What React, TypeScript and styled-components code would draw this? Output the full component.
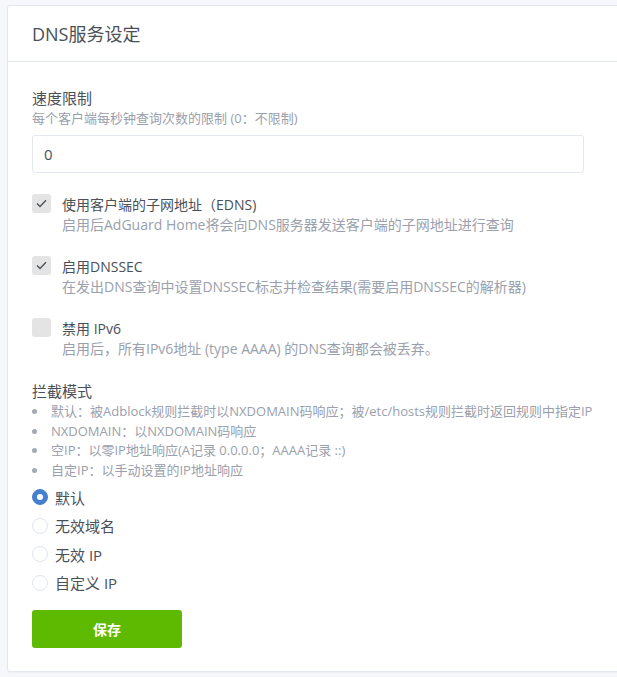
import React from "react";
import styled, { createGlobalStyle } from "styled-components";

const Global = createGlobalStyle`
  html, body {
    margin: 0;
    padding: 0;
    background: #f5f7fb;
    overflow: hidden;
  }
  body {
    font-family: "Open Sans", "Noto Sans CJK SC", sans-serif;
    color: #495057;
  }
  * { box-sizing: border-box; }
`;

const Page = styled.div`
  padding: 5px 0 5px 7px;
  overflow: hidden;
`;

const Card = styled.section`
  width: 640px;
  background: #fff;
  border: 1px solid #e3e7ee;
  border-radius: 3px;
  box-shadow: 0 1px 2px rgba(0, 0, 0, 0.04);
`;

const Header = styled.header`
  height: 56px;
  padding: 0 24px;
  display: flex;
  align-items: center;
  border-bottom: 1px solid #e3e7ee;
`;

const Title = styled.h3`
  margin: 0;
  font-size: 18px;
  font-weight: 400;
  line-height: 22px;
  color: #495057;
`;

const Body = styled.div`
  padding: 26px 24px 23px;
`;

const Label = styled.div<{ $size?: number }>`
  font-size: ${(p) => p.$size ?? 15}px;
  line-height: 20px;
  color: #495057;
`;

const Hint = styled.div<{ $size?: number }>`
  font-size: ${(p) => p.$size ?? 13}px;
  line-height: 20px;
  color: #9aa0ac;
`;

const Input = styled.input`
  display: block;
  width: 552px;
  height: 38px;
  margin-top: 7px;
  padding: 0 11px;
  border: 1px solid #e3e7ee;
  border-radius: 3px;
  font-family: inherit;
  font-size: 15px;
  color: #495057;
  outline: none;
`;

const CheckGroup = styled.div`
  display: grid;
  grid-template-columns: 19px 1fr;
  column-gap: 11px;
  margin-top: 21px;
`;

const Box = styled.span`
  width: 19px;
  height: 19px;
  border-radius: 3px;
  background: #e4e4e4;
  display: flex;
  align-items: center;
  justify-content: center;
`;

const CheckText = styled.div`
  padding-top: 1px;
`;

const Section = styled.div`
  margin-top: 22px;
`;

const List = styled.ul`
  list-style: none;
  margin: 1px 0 0;
  padding: 0;
`;

const Item = styled.li`
  display: flex;
  align-items: center;
  gap: 14px;
  font-size: 13px;
  line-height: 19.5px;
  color: #9aa0ac;
  white-space: nowrap;
  &::before {
    content: "";
    width: 5px;
    height: 5px;
    border-radius: 50%;
    background: #a4a9b3;
    flex: none;
  }
`;

const Radios = styled.div`
  margin-top: 3px;
  display: flex;
  flex-direction: column;
`;

const RadioRow = styled.label`
  height: 28.5px;
  display: flex;
  align-items: center;
  gap: 7px;
  font-size: 15px;
  color: #495057;
`;

const RadioDot = styled.span<{ $on?: boolean }>`
  width: 16px;
  height: 16px;
  border-radius: 50%;
  flex: none;
  background: ${(p) => (p.$on ? "#467fcf" : "#fff")};
  border: 1px solid ${(p) => (p.$on ? "#467fcf" : "#e0e5ec")};
  display: flex;
  align-items: center;
  justify-content: center;
  &::after {
    content: "";
    display: ${(p) => (p.$on ? "block" : "none")};
    width: 6px;
    height: 6px;
    border-radius: 50%;
    background: #fff;
  }
`;

const SaveButton = styled.button`
  margin-top: 13px;
  width: 150px;
  height: 38px;
  border: none;
  border-radius: 3px;
  background: #5eba00;
  color: #fff;
  font-family: inherit;
  font-size: 14px;
  font-weight: 700;
  cursor: pointer;
`;

const Check = () => (
  <svg width="11" height="9" viewBox="0 0 11 9" fill="none">
    <path d="M1 4.5 L4 7.5 L10 1.2" stroke="#495057" strokeWidth="1.3" />
  </svg>
);

const checks = [
  {
    label: "使用客户端的子网地址（EDNS)",
    hint: "启用后AdGuard Home将会向DNS服务器发送客户端的子网地址进行查询",
    on: true,
  },
  {
    label: "启用DNSSEC",
    hint: "在发出DNS查询中设置DNSSEC标志并检查结果(需要启用DNSSEC的解析器)",
    on: true,
  },
  {
    label: "禁用 IPv6",
    hint: "启用后，所有IPv6地址 (type AAAA) 的DNS查询都会被丢弃。",
    on: false,
  },
];

const bullets = [
  "默认：被Adblock规则拦截时以NXDOMAIN码响应；被/etc/hosts规则拦截时返回规则中指定IP",
  "NXDOMAIN：以NXDOMAIN码响应",
  "空IP：以零IP地址响应(A记录 0.0.0.0；AAAA记录 ::)",
  "自定IP：以手动设置的IP地址响应",
];

const radios = ["默认", "无效域名", "无效 IP", "自定义 IP"];

export default function App() {
  return (
    <>
      <Global />
      <Page>
        <Card>
          <Header>
            <Title>DNS服务设定</Title>
          </Header>
          <Body>
            <Label>速度限制</Label>
            <Hint>每个客户端每秒钟查询次数的限制 (0：不限制)</Hint>
            <Input defaultValue="0" />
            {checks.map((c, i) => (
              <CheckGroup key={i}>
                <Box>{c.on && <Check />}</Box>
                <CheckText>
                  <Label $size={14}>{c.label}</Label>
                  <Hint $size={14}>{c.hint}</Hint>
                </CheckText>
              </CheckGroup>
            ))}
            <Section>
              <Label>拦截模式</Label>
              <List>
                {bullets.map((b) => (
                  <Item key={b}>{b}</Item>
                ))}
              </List>
            </Section>
            <Radios>
              {radios.map((r, i) => (
                <RadioRow key={r}>
                  <RadioDot $on={i === 0} />
                  {r}
                </RadioRow>
              ))}
            </Radios>
            <SaveButton>保存</SaveButton>
          </Body>
        </Card>
      </Page>
    </>
  );
}
